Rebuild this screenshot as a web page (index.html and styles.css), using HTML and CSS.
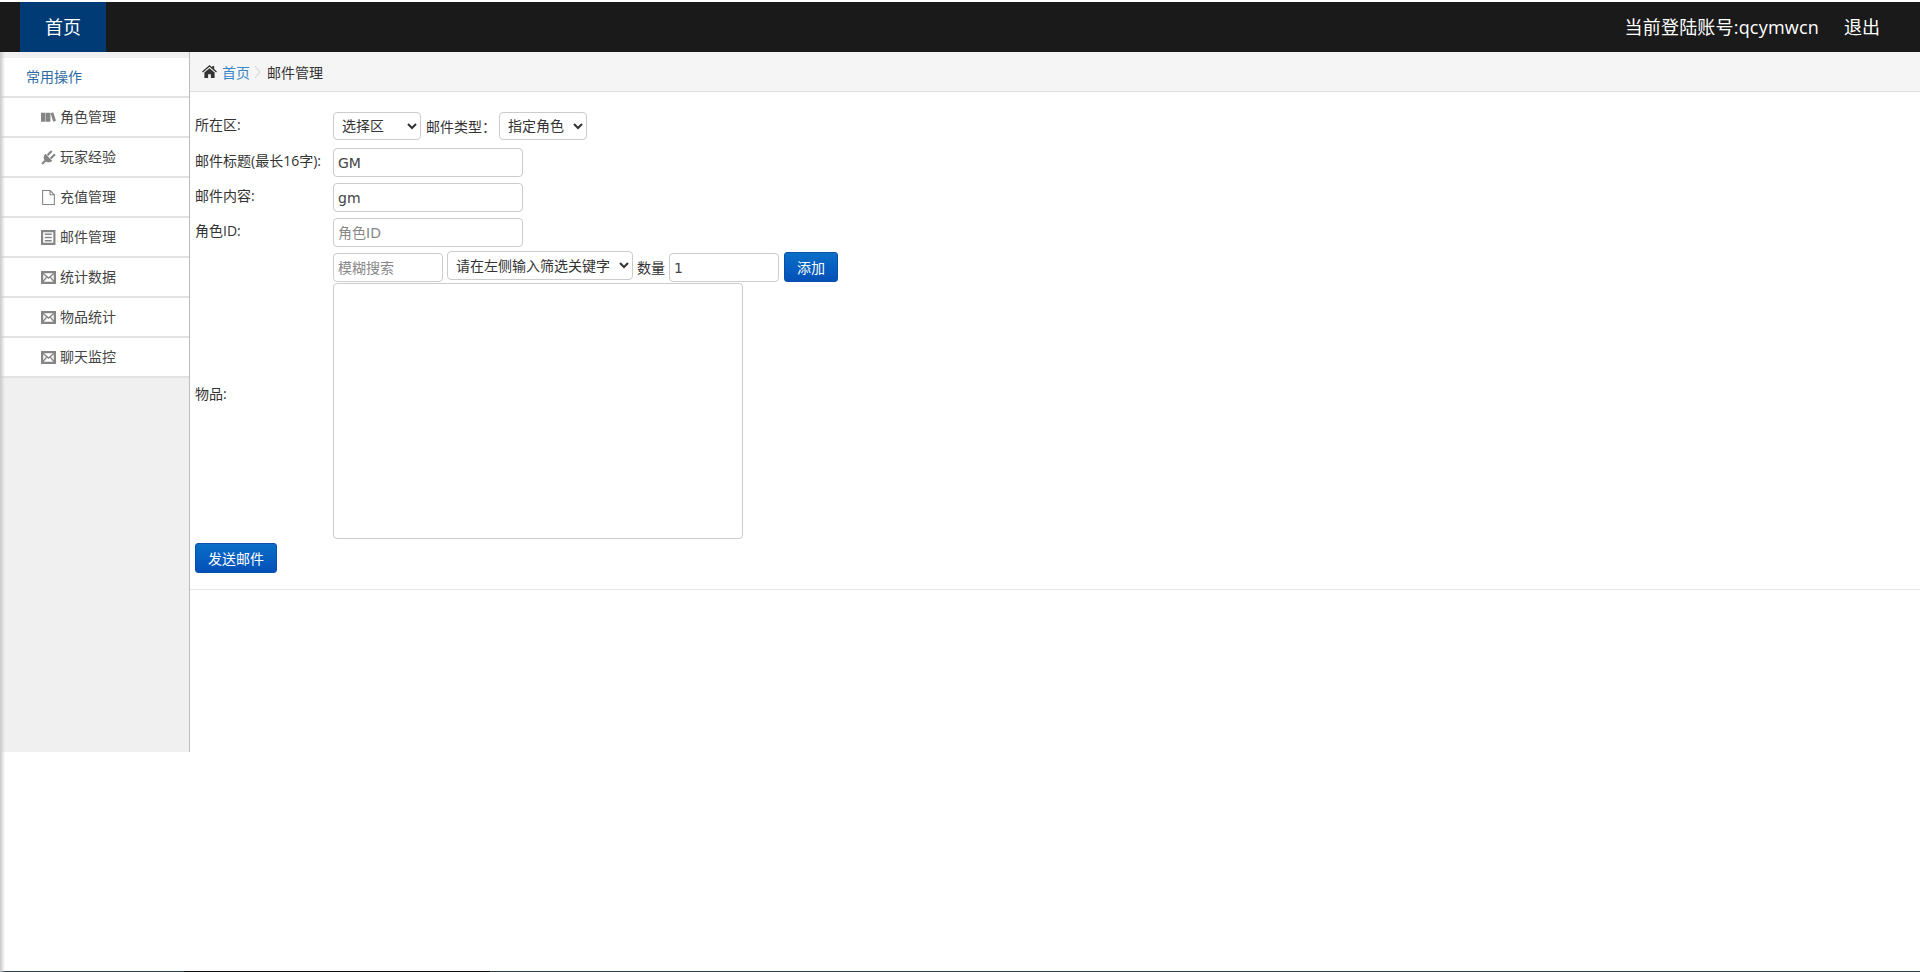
FILE: index.html
```html
<!DOCTYPE html>
<html lang="zh">
<head>
  <meta charset="UTF-8">
  <title>邮件管理</title>
  <link rel="stylesheet" href="styles.css">
</head>
<body>
<!-- 顶部导航 -->
<div class="navbar">
  <a class="brand">首页</a>
  <div class="user-info">
    <span>当前登陆账号:qcymwcn</span>
    <a>退出</a>
  </div>
</div>

<div class="wrap">
  <!-- 左侧菜单 -->
  <div class="sidebar">
    <ul class="menu">
      <li class="menu-head">常用操作</li>
      <li>
        <svg class="icon" viewBox="0 0 14 14"><path d="M0 2.500h4.200v8.500H0zM4.600 2.500h4.200v8.500H4.600zM9 3l2.400-.9L14 10l-2.600 1z"/></svg>
        角色管理
      </li>
      <li>
        <svg class="icon" viewBox="0 0 14 14"><path d="M4 3.500l6.500 6.500C8.500 12 5.500 12 3.800 10.200 2 8.500 2 5.500 4 3.500z"/><path class="plug" d="M6 5L10 1M9 8L13 4M4 10L1 13"/></svg>
        玩家经验
      </li>
      <li>
        <svg class="icon" viewBox="0 0 14 14"><path class="line" d="M1.500.5h7l4 4v9h-11zM8.500.5v4h4"/></svg>
        充值管理
      </li>
      <li>
        <svg class="icon" viewBox="0 0 14 14"><path class="list" d="M1 1h11.500v12H1z"/><path class="list-row" d="M3.500 4h6.500M3.500 7h6.500M3.500 10h6.500"/></svg>
        邮件管理
      </li>
      <li>
        <svg class="icon" viewBox="0 0 14 14"><path class="mail" d="M1 2h12v10H1z"/><path class="mail-x" d="M1.500 2.800L7 7.500l5.500-4.700M1.500 11.200l4-4.800M12.500 11.200l-4-4.800"/></svg>
        统计数据
      </li>
      <li>
        <svg class="icon" viewBox="0 0 14 14"><path class="mail" d="M1 2h12v10H1z"/><path class="mail-x" d="M1.500 2.800L7 7.500l5.500-4.700M1.500 11.200l4-4.800M12.500 11.200l-4-4.800"/></svg>
        物品统计
      </li>
      <li>
        <svg class="icon" viewBox="0 0 14 14"><path class="mail" d="M1 2h12v10H1z"/><path class="mail-x" d="M1.500 2.800L7 7.500l5.500-4.700M1.500 11.200l4-4.800M12.500 11.200l-4-4.800"/></svg>
        聊天监控
      </li>
    </ul>
  </div>

  <!-- 内容区 -->
  <div class="content">
    <div class="breadcrumb">
      <svg class="home" viewBox="0 0 16 14"><path d="M8 0l3 2.600V1h2v3.300L16 7l-.9 1L8 2 .9 8 0 7zM8 3.400l5.500 4.600V14H9.500v-4h-3v4H2.500V8z"/></svg>
      <a>首页</a>
      <svg class="sep" viewBox="0 0 7 14"><path d="M1 1l5 6-5 6"/></svg>
      <span>邮件管理</span>
    </div>

    <form class="mail-form">
      <div class="row row-first">
        <label>所在区:</label>
        <div class="field">
          <select class="sel-zone"><option>选择区</option></select>
          <span>邮件类型：</span>
          <select class="sel-type"><option>指定角色</option></select>
        </div>
      </div>
      <div class="row">
        <label>邮件标题(最长16字):</label>
        <div class="field"><input class="inp" type="text" value="GM"></div>
      </div>
      <div class="row">
        <label>邮件内容:</label>
        <div class="field"><input class="inp" type="text" value="gm"></div>
      </div>
      <div class="row">
        <label>角色ID:</label>
        <div class="field"><input class="inp" type="text" placeholder="角色ID"></div>
      </div>
      <div class="row row-items">
        <label>物品:</label>
        <div class="field">
          <div class="item-bar">
            <input class="inp-search" type="text" placeholder="模糊搜索">
            <select class="sel-item"><option>请在左侧输入筛选关键字</option></select>
            <span>数量</span>
            <input class="inp-num" type="text" value="1">
            <button class="btn btn-add" type="button">添加</button>
          </div>
          <textarea class="items"></textarea>
        </div>
      </div>
      <button class="btn btn-send" type="button">发送邮件</button>
    </form>
    <hr class="divider">
  </div>
</div>
<div class="taskbar"></div>
</body>
</html>
```

FILE: styles.css
```css
/* 全局样式 */
body {
  margin: 0;
  padding-top: 2px;
  box-sizing: border-box;
  height: 972px;
  overflow: hidden;
  background: #fff;
  position: relative;
  font-family: "DejaVu Sans", "Noto Sans CJK SC", sans-serif;
  font-size: 14px;
  color: #333;
}
/* 左边缘的阴影 */
body::before {
  content: "";
  position: absolute;
  top: 52px;
  left: 0;
  bottom: 0;
  width: 5px;
  background: linear-gradient(to right, #c8c8c8, rgba(255, 255, 255, 0));
  z-index: 2;
}
/* 顶部导航 */
.navbar {
  height: 50px;
  background: #1a1a1a;
  display: flex;
  justify-content: space-between;
  padding: 0 40px 0 20px;
  color: #fff;
  font-size: 18px;
  line-height: 50px;
  font-family: "Open Sans", "Noto Sans CJK SC", sans-serif;
}
.brand {
  width: 86px;
  text-align: center;
  background: #003b75;
}
.user-info {
  display: flex;
  gap: 25px;
}
.user-info span {
  letter-spacing: 0.2px;
}
.wrap {
  display: flex;
}
/* 左侧菜单 */
.sidebar {
  width: 190px;
  height: 700px;
  flex: none;
  padding-top: 6px;
  box-sizing: border-box;
  background: #f0f0f0;
  border-right: 1px solid #bdbdbd;
}
.menu {
  list-style: none;
  margin: 0;
  padding: 0;
  background: #fff;
}
.menu li {
  height: 38px;
  line-height: 38px;
  padding-left: 41px;
  border-bottom: 2px solid #e2e2e2;
  display: flex;
  align-items: center;
  gap: 4px;
  color: #444;
}
.menu .menu-head {
  padding-left: 26px;
  color: #2f6aa3;
}
.icon {
  width: 15px;
  height: 15px;
  fill: #858585;
  flex: none;
}
.icon .line {
  fill: none;
  stroke: #858585;
  stroke-width: 1;
}
.icon .plug {
  fill: none;
  stroke: #858585;
  stroke-width: 2;
}
.icon .list {
  fill: none;
  stroke: #858585;
  stroke-width: 2;
}
.icon .list-row {
  fill: none;
  stroke: #858585;
  stroke-width: 1.300;
}
.icon .mail {
  fill: #fff;
  stroke: #858585;
  stroke-width: 2.200;
}
.icon .mail-x {
  fill: none;
  stroke: #858585;
  stroke-width: 1.300;
}
/* 面包屑 */
.content {
  flex: 1;
}
.breadcrumb {
  height: 40px;
  box-sizing: border-box;
  background: #f5f5f5;
  border-bottom: 1px solid #ddd;
  padding-left: 12px;
  display: flex;
  align-items: center;
}
.breadcrumb a {
  color: #3a87c8;
  margin-left: 5px;
}
.breadcrumb span {
  margin-left: 6px;
}
.home {
  width: 15px;
  height: 13px;
  fill: #333;
}
.sep {
  width: 7px;
  height: 14px;
  margin-left: 4px;
  fill: none;
  stroke: #cfcfcf;
}
/* 表单 */
.mail-form {
  padding: 20px 0 0 5px;
}
.row {
  display: flex;
  align-items: center;
  margin-bottom: 6px;
}
.row-first {
  margin-bottom: 8px;
}
.row label {
  width: 138px;
  flex: none;
  font-family: "Open Sans", "Noto Sans CJK SC", sans-serif;
  position: relative;
  top: -3px;
}
.row-first label {
  top: -2px;
}
.field {
  display: flex;
  align-items: center;
  gap: 5px;
}
.row-items {
  margin-bottom: 4px;
}
.row-items .field {
  display: block;
}
.item-bar {
  display: flex;
  align-items: flex-start;
  height: 30px;
}
input, select, textarea {
  box-sizing: border-box;
  border: 1px solid #ccc;
  border-radius: 4px;
  background: #fff;
  font-family: inherit;
  font-size: 14px;
  color: #444;
  outline: none;
}
input {
  padding: 0 4px;
}
input::placeholder {
  color: #888;
}
select {
  height: 28px;
  padding: 0 4px;
  color: #333;
}
.inp {
  width: 190px;
  height: 29px;
}
.sel-zone {
  width: 88px;
}
.sel-type {
  width: 88px;
  margin-left: -2px;
}
.inp-search {
  width: 110px;
  height: 29px;
}
.sel-item {
  width: 186px;
  margin: -2px 0 0 4px;
  height: 29px;
}
.item-bar span {
  margin: 4px 0 0 4px;
}
.inp-num {
  width: 110px;
  height: 29px;
  margin-left: 4px;
}
.items {
  display: block;
  width: 410px;
  height: 256px;
  resize: none;
}
.btn {
  border: 1px solid #0a4fa8;
  border-radius: 3px;
  background: linear-gradient(to bottom, #0a6fc8, #0350b8);
  color: #fff;
  font-family: inherit;
  font-size: 14px;
  padding: 0;
}
.btn-add {
  width: 54px;
  height: 30px;
  margin: -1px 0 0 5px;
}
.btn-send {
  display: block;
  width: 82px;
  height: 30px;
}
.divider {
  border: none;
  border-top: 1px solid #e5e5e5;
  margin: 16px 0 0;
}
/* 底部残留的深色条 */
.taskbar {
  position: absolute;
  left: 0;
  right: 0;
  bottom: 0;
  height: 1px;
  background: linear-gradient(to right, #2f3f48 184px, #111 184px, #111 490px, #2f3f48 490px);
}
```
